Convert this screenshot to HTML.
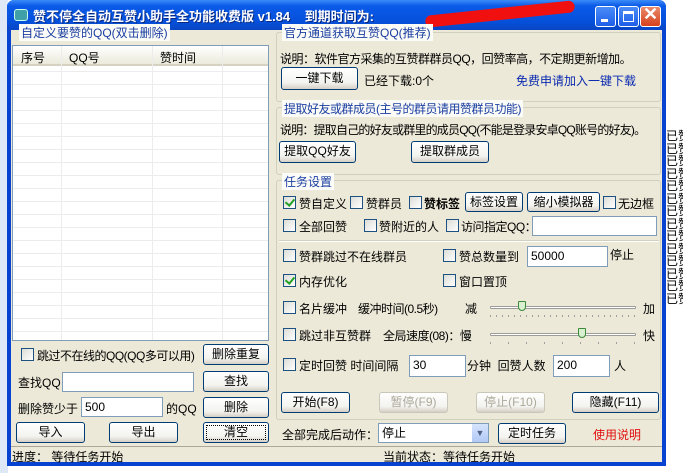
<!DOCTYPE html>
<html><head><meta charset="utf-8"><style>
*{box-sizing:border-box;margin:0;padding:0}
body{width:683px;height:473px;overflow:hidden;background:#fff;font-family:"Liberation Sans","Noto Sans CJK SC","WenQuanYi Zen Hei",sans-serif;font-size:12px;color:#000;position:relative}
.a{position:absolute;white-space:nowrap}
.win{position:absolute;left:7px;top:0;width:659px;height:466px;background:#0842d0;border-radius:7px 7px 0 0}
.title{position:absolute;left:0;top:0;width:659px;height:30px;border-radius:7px 7px 0 0;background:linear-gradient(#3a8cf7,#0a5ae8 20%,#0551dc 70%,#0846c4)}
.body{position:absolute;left:4px;top:30px;width:651px;height:432px;background:#ece9d8}
.btn{position:absolute;border:1px solid #003c74;border-radius:3px;background:linear-gradient(#fff,#f3f3ef 70%,#d6d0c5);text-align:center;font-size:12px;line-height:19px}
.dis{color:#aca899;border-color:#c9c7ba}
.cb{position:absolute;width:13px;height:13px;border:1px solid #1c5180;background:linear-gradient(135deg,#dcdcd7,#fff)}
.ck::after{content:"";position:absolute;left:3px;top:0px;width:4px;height:7px;border:solid #21a121;border-width:0 2px 2px 0;transform:rotate(40deg)}
.in{position:absolute;background:#fff;border:1px solid #7f9db9;padding-left:3px;font-size:12px;line-height:18px}
.gl{position:absolute;color:#1a3ea0;background:#fbfbf8;padding:0 2px;white-space:nowrap}
.sep{position:absolute;height:2px;border-top:1px solid #d0d0bf;border-bottom:1px solid #fff}
.grp{position:absolute;border:1px solid #d0d0bf;border-radius:3px}
.tb{position:absolute;top:6px;width:21px;height:21px;border:1px solid #fff;border-radius:3px;background:linear-gradient(#4a8cf8,#1e5ee8)}
.n{letter-spacing:-0.5px}
</style></head><body>
<div class="a" style="left:0;top:0;width:8px;height:473px;background:#dfe8f6"></div>
<div class="a" style="left:666px;top:0;width:17px;height:473px;background:#fff;overflow:hidden">
<div style="position:absolute;left:0;top:130px;font-size:12px;line-height:12.5px;white-space:pre">已赞
已赞
已赞
已赞
已赞
已赞
已赞
已赞
已赞
已赞
已赞
已赞
已赞
已赞</div></div>
<div class="win">
<div class="title"></div>
<div class="a" style="left:7px;top:9px;width:14px;height:12px;border-radius:3px;background:#3fa0a8;border:1px solid #cfe"></div>
<div class="a" style="left:26px;top:6px;color:#fff;font-weight:bold;font-size:13px;text-shadow:1px 1px #0a2a80">赞不停全自动互赞小助手全功能收费版 v1.84 &nbsp; &nbsp;到期时间为:</div>
<div class="a" style="left:418px;top:8px;width:150px;height:12px;background:#f01010;border-radius:6px;transform:rotate(-6deg)"></div>
<div class="tb" style="left:588px"><div class="a" style="left:5px;top:12px;width:7px;height:3px;background:#fff"></div></div>
<div class="tb" style="left:611px"><div class="a" style="left:4px;top:4px;width:11px;height:11px;border:1px solid #fff;border-top-width:3px"></div></div>
<div class="tb" style="left:633px;background:linear-gradient(#e88a6a,#d8401c)"><div class="a" style="left:2px;top:-3px;color:#fff;font-size:18px;font-weight:bold">✕</div></div>
<div class="body">
<div class="gl" style="left:8px;top:-6px">自定义要赞的QQ(双击删除)</div>
<div class="a" style="left:1px;top:15px;width:257px;height:296px;background:#fff;border:1px solid #7f9db9;background-image:repeating-linear-gradient(#fff 0 12px,#ececec 12px 13px)">
<div class="a" style="left:0;top:0;width:255px;height:20px;background:linear-gradient(#fff,#ebeadb);border-bottom:2px solid #d6d2c2"></div>
<div class="a" style="left:48px;top:0;width:1px;height:294px;background:#ececec"></div>
<div class="a" style="left:139px;top:0;width:1px;height:294px;background:#ececec"></div>
<div class="a" style="left:209px;top:0;width:1px;height:294px;background:#ececec"></div>
<div class="a" style="left:8px;top:3px">序号</div><div class="a" style="left:56px;top:3px">QQ号</div><div class="a" style="left:147px;top:3px">赞时间</div>
</div>
<div class="cb" style="left:10px;top:318px"></div><div class="a n" style="left:26px;top:317px">跳过不在线的QQ(QQ多可以用)</div>
<div class="btn" style="left:192px;top:314px;width:66px;height:21px">删除重复</div>
<div class="a" style="left:7px;top:344px">查找QQ：</div><div class="in" style="left:51px;top:342px;width:132px;height:20px"></div>
<div class="btn" style="left:192px;top:341px;width:66px;height:21px">查找</div>
<div class="a" style="left:7px;top:370px">删除赞少于</div><div class="in" style="left:70px;top:367px;width:82px;height:20px">500</div><div class="a" style="left:155px;top:370px">的QQ</div>
<div class="btn" style="left:192px;top:367px;width:66px;height:21px">删除</div>
<div class="btn" style="left:5px;top:392px;width:69px;height:21px">导入</div>
<div class="btn" style="left:98px;top:392px;width:69px;height:21px">导出</div>
<div class="btn" style="left:192px;top:392px;width:66px;height:21px;outline:1px dotted #000;outline-offset:-4px">清空</div>
<div class="grp" style="left:265px;top:2px;width:385px;height:70px"></div>
<div class="gl" style="left:271px;top:-6px">官方通道获取互赞QQ(推荐)</div>
<div class="a n" style="left:269px;top:20px">说明：软件官方采集的互赞群群员QQ，回赞率高，不定期更新增加。</div>
<div class="btn" style="left:270px;top:37px;width:77px;height:23px;line-height:21px">一键下载</div>
<div class="a" style="left:353px;top:42px">已经下载:0个</div>
<div class="a" style="left:505px;top:42px;color:#0a2ab0">免费申请加入一键下载</div>
<div class="grp" style="left:265px;top:77px;width:385px;height:68px"></div>
<div class="gl n" style="left:271px;top:70px">提取好友或群成员(主号的群员请用赞群员功能)</div>
<div class="a" style="left:269px;top:91px;letter-spacing:-0.8px">说明：提取自己的好友或群里的成员QQ(不能是登录安卓QQ账号的好友)。</div>
<div class="btn" style="left:268px;top:111px;width:77px;height:22px">提取QQ好友</div>
<div class="btn" style="left:400px;top:111px;width:78px;height:22px">提取群成员</div>
<div class="grp" style="left:265px;top:150px;width:385px;height:240px"></div>
<div class="gl" style="left:271px;top:143px">任务设置</div>
<div class="cb ck" style="left:272px;top:166px"></div><div class="a" style="left:288px;top:165px">赞自定义</div>
<div class="cb" style="left:339px;top:166px"></div><div class="a" style="left:355px;top:165px">赞群员</div>
<div class="cb" style="left:398px;top:166px"></div><div class="a" style="left:413px;top:165px;font-weight:bold">赞标签</div>
<div class="btn" style="left:454px;top:162px;width:58px;height:20px;line-height:18px">标签设置</div>
<div class="btn" style="left:516px;top:162px;width:73px;height:20px;line-height:18px">缩小模拟器</div>
<div class="cb" style="left:592px;top:166px"></div><div class="a" style="left:607px;top:165px">无边框</div>
<div class="cb" style="left:272px;top:189px"></div><div class="a" style="left:288px;top:188px">全部回赞</div>
<div class="cb" style="left:353px;top:189px"></div><div class="a" style="left:368px;top:188px">赞附近的人</div>
<div class="cb" style="left:435px;top:189px"></div><div class="a n" style="left:450px;top:188px">访问指定QQ：</div>
<div class="in" style="left:521px;top:186px;width:125px;height:20px"></div>
<div class="sep" style="left:268px;top:210px;width:380px"></div>
<div class="cb" style="left:272px;top:219px"></div><div class="a" style="left:288px;top:218px">赞群跳过不在线群员</div>
<div class="cb" style="left:432px;top:219px"></div><div class="a" style="left:448px;top:218px">赞总数量到</div>
<div class="in" style="left:516px;top:216px;width:81px;height:21px">50000</div><div class="a" style="left:599px;top:216px">停止</div>
<div class="cb ck" style="left:272px;top:244px"></div><div class="a" style="left:288px;top:243px">内存优化</div>
<div class="cb" style="left:432px;top:244px"></div><div class="a" style="left:448px;top:243px">窗口置顶</div>
<div class="cb" style="left:272px;top:271px"></div><div class="a" style="left:288px;top:270px">名片缓冲</div><div class="a n" style="left:347px;top:270px">缓冲时间(0.5秒)</div><div class="a" style="left:454px;top:270px">减</div>
<div class="a" style="left:479px;top:276px;width:146px;height:3px;border:1px solid #9d9c99;border-radius:1px;background:#fff"></div>
<div class="a" style="left:479px;top:285px;width:146px;height:2px;background:repeating-linear-gradient(90deg,#a0a0a0 0 1px,transparent 1px 6px)"></div>
<div class="a" style="left:507px;top:271px;width:8px;height:10px;background:#d8f0d0;border:1px solid #3a8a3a;border-radius:1px 1px 4px 4px"></div>
<div class="a" style="left:632px;top:270px">加</div>
<div class="cb" style="left:272px;top:298px"></div><div class="a" style="left:288px;top:297px">跳过非互赞群</div><div class="a n" style="left:372px;top:297px">全局速度(08)：慢</div>
<div class="a" style="left:479px;top:303px;width:146px;height:3px;border:1px solid #9d9c99;border-radius:1px;background:#fff"></div>
<div class="a" style="left:479px;top:312px;width:146px;height:2px;background:repeating-linear-gradient(90deg,#a0a0a0 0 1px,transparent 1px 18px)"></div>
<div class="a" style="left:567px;top:298px;width:8px;height:10px;background:#d8f0d0;border:1px solid #3a8a3a;border-radius:1px 1px 4px 4px"></div>
<div class="a" style="left:632px;top:297px">快</div>
<div class="cb" style="left:272px;top:328px"></div><div class="a" style="left:288px;top:327px">定时回赞 时间间隔</div>
<div class="in" style="left:398px;top:325px;width:57px;height:22px">30</div><div class="a" style="left:456px;top:327px">分钟 &nbsp;回赞人数</div>
<div class="in" style="left:542px;top:325px;width:57px;height:22px">200</div><div class="a" style="left:603px;top:327px">人</div>
<div class="btn" style="left:270px;top:362px;width:69px;height:21px">开始(F8)</div>
<div class="btn dis" style="left:368px;top:362px;width:69px;height:21px">暂停(F9)</div>
<div class="btn dis" style="left:465px;top:362px;width:69px;height:21px">停止(F10)</div>
<div class="btn" style="left:561px;top:362px;width:87px;height:21px">隐藏(F11)</div>
<div class="a" style="left:271px;top:396px">全部完成后动作：</div>
<div class="in" style="left:367px;top:393px;width:111px;height:20px">停止<div class="a" style="right:0;top:0;width:17px;height:18px;background:linear-gradient(#d6e4fc,#b2c9f6);border-left:1px solid #fff;color:#4d6185;font-size:9px;text-align:center;line-height:18px">▼</div></div>
<div class="btn" style="left:487px;top:393px;width:68px;height:21px">定时任务</div>
<div class="a" style="left:582px;top:396px;color:#e01010">使用说明</div>
<div class="a" style="left:0;top:416px;width:651px;height:1px;background:#aca899"></div>
<div class="a" style="left:1px;top:418px">进度： 等待任务开始</div>
<div class="a" style="left:372px;top:418px">当前状态：等待任务开始</div>
</div></div>
</body></html>
